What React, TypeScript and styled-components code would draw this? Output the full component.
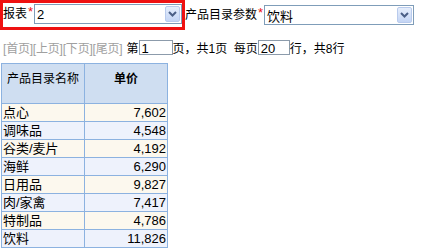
import React from "react";
import styled, { createGlobalStyle } from "styled-components";

const GlobalStyle = createGlobalStyle`
  body {
    margin: 0;
    background: #ffffff;
    font-family: "Liberation Sans", "Noto Sans CJK SC", sans-serif;
    font-size: 12px;
    color: #000000;
  }
`;

const Page = styled.div`
  width: 436px;
  height: 248px;
  overflow: hidden;
`;

const ParamBar = styled.div`
  display: flex;
  align-items: flex-start;
  height: 30px;
`;

const Highlight = styled.div`
  display: flex;
  align-items: flex-start;
  box-sizing: border-box;
  width: 185px;
  height: 30px;
  border: 3px solid #ee1111;
  padding-top: 1px;
`;

const Label = styled.span<{ $pad?: number }>`
  display: flex;
  align-items: center;
  height: 20px;
  padding-left: ${(p) => p.$pad ?? 0}px;
  white-space: nowrap;
  line-height: 20px;
  margin-top: ${(p) => (p.$pad === undefined ? 5 : 0)}px;
`;

const Star = styled.span`
  color: #ee1111;
  font-size: 13px;
  margin: 0 1px;
  align-self: flex-start;
  line-height: 16px;
`;

const Combo = styled.div<{ $w: number; $top?: number }>`
  display: flex;
  align-items: center;
  justify-content: space-between;
  box-sizing: border-box;
  width: ${(p) => p.$w}px;
  height: 20px;
  margin-top: ${(p) => p.$top ?? 0}px;
  border: 1px solid #7f9db9;
  background: #ffffff;
  padding: 0 1px 0 2px;
  font-size: 13px;
`;

const DropButton = styled.div`
  display: flex;
  align-items: center;
  justify-content: center;
  box-sizing: border-box;
  width: 15px;
  height: 16px;
  border: 1px solid #b9cbed;
  border-radius: 2px;
  background: linear-gradient(#e6eefc, #c4d5f5);
`;

const Pager = styled.div`
  display: flex;
  align-items: center;
  height: 16px;
  margin-top: 9px;
  padding-left: 3px;
  white-space: nowrap;
`;

const PagerLink = styled.span`
  color: #a0a0a0;
  letter-spacing: -0.2px;
  margin-right: 4px;
`;

const PageInput = styled.div<{ $w: number }>`
  box-sizing: border-box;
  width: ${(p) => p.$w}px;
  height: 15px;
  border: 1px solid #8c9bab;
  padding-left: 2px;
  line-height: 15px;
  font-size: 13px;
  margin-top: 1px;
`;

const Grid = styled.table`
  border-collapse: collapse;
  margin: 8px 0 0 1px;
  width: 167px;
`;

const HeadCell = styled.th<{ $bold?: boolean }>`
  height: 34px;
  padding: 5px 0 0 0;
  vertical-align: top;
  width: 83px;
  background: #cfdef1;
  border: 1px solid #8cb2e0;
  font-weight: ${(p) => (p.$bold ? "bold" : "normal")};
  font-size: 12px;
  text-align: center;
`;

const Row = styled.tr<{ $alt: boolean }>`
  background: ${(p) => (p.$alt ? "#eef2fc" : "#fcf8ee")};
`;

const Cell = styled.td<{ $num?: boolean }>`
  height: 17px;
  padding: 0 1px;
  border: 1px solid #8cb2e0;
  text-align: ${(p) => (p.$num ? "right" : "left")};
  font-size: 13px;
  line-height: 17px;
`;

const Chevron = () => (
  <svg width="9" height="6" viewBox="0 0 9 6">
    <path d="M1 1 L4.5 4.5 L8 1" fill="none" stroke="#4b5f86" strokeWidth="2" />
  </svg>
);

const rows = [
  ["点心", "7,602"],
  ["调味品", "4,548"],
  ["谷类/麦片", "4,192"],
  ["海鲜", "6,290"],
  ["日用品", "9,827"],
  ["肉/家禽", "7,417"],
  ["特制品", "4,786"],
  ["饮料", "11,826"],
];

export default function App() {
  return (
    <Page>
      <GlobalStyle />
      <ParamBar>
        <Highlight>
          <Label $pad={0}>
            报表<Star>*</Star>
          </Label>
          <Combo $w={148}>
            <span>2</span>
            <DropButton>
              <Chevron />
            </DropButton>
          </Combo>
        </Highlight>
        <Label>
          产品目录参数<Star>*</Star>
        </Label>
        <Combo $w={150} $top={5}>
          <span>饮料</span>
          <DropButton>
            <Chevron />
          </DropButton>
        </Combo>
      </ParamBar>
      <Pager>
        <PagerLink>[首页][上页][下页][尾页]</PagerLink>
        第<PageInput $w={34}>1</PageInput>页，共1页&nbsp;&nbsp;每页
        <PageInput $w={32}>20</PageInput>行，共8行
      </Pager>
      <Grid>
        <thead>
          <tr>
            <HeadCell>产品目录名称</HeadCell>
            <HeadCell $bold>单价</HeadCell>
          </tr>
        </thead>
        <tbody>
          {rows.map(([name, price], i) => (
            <Row key={name} $alt={i % 2 === 1}>
              <Cell>{name}</Cell>
              <Cell $num>{price}</Cell>
            </Row>
          ))}
        </tbody>
      </Grid>
    </Page>
  );
}
